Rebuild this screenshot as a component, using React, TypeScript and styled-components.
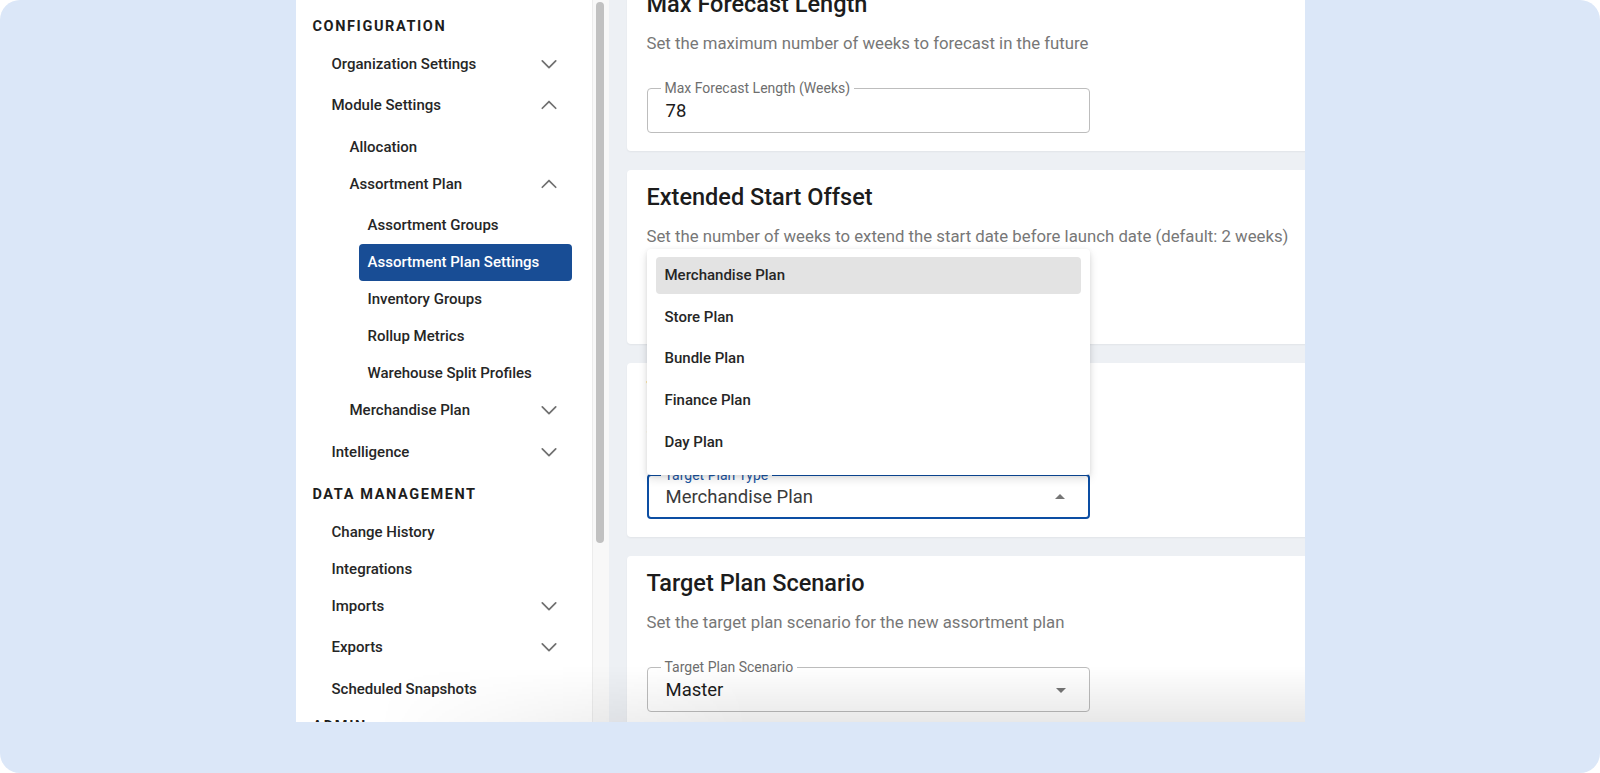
import React from 'react'
import styled, { createGlobalStyle } from 'styled-components'

const GlobalStyle = createGlobalStyle`
	html, body {
		margin: 0;
		padding: 0;
		background: #ffffff;
	}
	body {
		font-family: Roboto, "Noto Sans", "Liberation Sans", sans-serif;
		-webkit-font-smoothing: antialiased;
	}
	* {
		box-sizing: border-box;
	}
`

type NavItem =
	| { kind: 'header'; label: string }
	| { kind: 'row'; label: string; level: number; chevron?: 'up' | 'down'; active?: boolean }

const NAV: NavItem[] = [
	{ kind: 'header', label: 'CONFIGURATION' },
	{ kind: 'row', label: 'Organization Settings', level: 1, chevron: 'down' },
	{ kind: 'row', label: 'Module Settings', level: 1, chevron: 'up' },
	{ kind: 'row', label: 'Allocation', level: 2 },
	{ kind: 'row', label: 'Assortment Plan', level: 2, chevron: 'up' },
	{ kind: 'row', label: 'Assortment Groups', level: 3 },
	{ kind: 'row', label: 'Assortment Plan Settings', level: 3, active: true },
	{ kind: 'row', label: 'Inventory Groups', level: 3 },
	{ kind: 'row', label: 'Rollup Metrics', level: 3 },
	{ kind: 'row', label: 'Warehouse Split Profiles', level: 3 },
	{ kind: 'row', label: 'Merchandise Plan', level: 2, chevron: 'down' },
	{ kind: 'row', label: 'Intelligence', level: 1, chevron: 'down' },
	{ kind: 'header', label: 'DATA MANAGEMENT' },
	{ kind: 'row', label: 'Change History', level: 1 },
	{ kind: 'row', label: 'Integrations', level: 1 },
	{ kind: 'row', label: 'Imports', level: 1, chevron: 'down' },
	{ kind: 'row', label: 'Exports', level: 1, chevron: 'down' },
	{ kind: 'row', label: 'Scheduled Snapshots', level: 1 },
	{ kind: 'header', label: 'ADMIN' },
]

const PLAN_TYPES = ['Merchandise Plan', 'Store Plan', 'Bundle Plan', 'Finance Plan', 'Day Plan']

const Chevron = ({ dir }: { dir: 'up' | 'down' }) => (
	<svg width="26" height="26" viewBox="0 0 24 24" fill="none">
		<path
			d={dir === 'down' ? 'M5.8 9.2l6.2 6.2 6.2-6.2' : 'M5.8 15l6.2-6.2 6.2 6.2'}
			stroke="#707070"
			strokeWidth="1.6"
			strokeLinecap="round"
			strokeLinejoin="round"
		/>
	</svg>
)

const Caret = ({ dir }: { dir: 'up' | 'down' }) => (
	<svg width="24" height="24" viewBox="0 0 24 24">
		<path d={dir === 'down' ? 'M7 10l5 5 5-5z' : 'M7 14l5-5 5 5z'} fill="#767676" />
	</svg>
)

const App = () => {
	return (
		<>
			<GlobalStyle />
			<Frame>
				<Window>
					<Sidebar>
						{NAV.map((item, i) =>
							item.kind === 'header' ? (
								<SectionHeader key={i}>{item.label}</SectionHeader>
							) : (
								<NavRow key={i} $level={item.level} $tall={!!item.chevron} $active={!!item.active}>
									<span>{item.label}</span>
									{item.chevron ? <Chevron dir={item.chevron} /> : null}
								</NavRow>
							)
						)}
					</Sidebar>
					<ScrollTrack>
						<ScrollThumb />
					</ScrollTrack>
					<Main>
						<Cards>
							<Card>
								<CardTitle>Max Forecast Length</CardTitle>
								<CardText>Set the maximum number of weeks to forecast in the future</CardText>
								<Field>
									<FieldLabel>Max Forecast Length (Weeks)</FieldLabel>
									<FieldValue>78</FieldValue>
								</Field>
							</Card>
							<Card>
								<CardTitle>Extended Start Offset</CardTitle>
								<CardText>
									Set the number of weeks to extend the start date before launch date (default: 2 weeks)
								</CardText>
								<Field>
									<FieldLabel>Extended Start Offset (Weeks)</FieldLabel>
									<FieldValue>2</FieldValue>
								</Field>
							</Card>
							<Card>
								<CardTitle>Target Plan Type</CardTitle>
								<CardText>Set the target plan type for the new assortment plan</CardText>
								<Field $focused>
									<FieldLabel $focused>Target Plan Type</FieldLabel>
									<FieldValue $muted>Merchandise Plan</FieldValue>
									<Caret dir="up" />
									<Menu>
										{PLAN_TYPES.map((p, i) => (
											<MenuItem key={p} $selected={i === 0}>
												{p}
											</MenuItem>
										))}
									</Menu>
								</Field>
							</Card>
							<Card>
								<CardTitle>Target Plan Scenario</CardTitle>
								<CardText>Set the target plan scenario for the new assortment plan</CardText>
								<Field>
									<FieldLabel>Target Plan Scenario</FieldLabel>
									<FieldValue>Master</FieldValue>
									<Caret dir="down" />
								</Field>
							</Card>
						</Cards>
					</Main>
					<BottomFade />
				</Window>
			</Frame>
		</>
	)
}

const Frame = styled.div`
	width: 1600px;
	height: 773px;
	background: #dbe7f8;
	border-radius: 20px;
	display: flex;
	justify-content: center;
	align-items: flex-start;
	overflow: hidden;
`
const Window = styled.div`
	position: relative;
	width: 1009px;
	height: 722px;
	display: flex;
	overflow: hidden;
	background: #ffffff;
`
const Sidebar = styled.nav`
	flex: 0 0 296px;
	padding-top: 6.8px;
	display: flex;
	flex-direction: column;
	overflow: hidden;
`
const SectionHeader = styled.div`
	flex: 0 0 38.5px;
	display: flex;
	align-items: center;
	padding-left: 17px;
	font-size: 14.5px;
	font-weight: 700;
	letter-spacing: 1.6px;
	color: #1d1d1d;
`
const NavRow = styled.div<{ $level: number; $tall: boolean; $active: boolean }>`
	flex: 0 0 37px;
	display: flex;
	align-items: center;
	justify-content: space-between;
	margin: 0 20px ${(p) => (p.$tall ? 4.5 : 0)}px ${(p) => 9 + p.$level * 18}px;
	padding: 0 10px 0 9px;
	border-radius: 4px;
	font-size: 15px;
	font-weight: 500;
	color: ${(p) => (p.$active ? '#ffffff' : '#262626')};
	background: ${(p) => (p.$active ? '#184d95' : 'transparent')};
`
const ScrollTrack = styled.div`
	flex: 0 0 17px;
	background: #f8f8f8;
	border-left: 1px solid #ececec;
	padding: 2px 0 0 3px;
`
const ScrollThumb = styled.div`
	width: 8px;
	height: 541px;
	border-radius: 4px;
	background: #c1c1c1;
`
const Main = styled.main`
	flex: 1 1 auto;
	background: #edf0f4;
	padding-left: 18px;
	overflow: hidden;
`
const Cards = styled.div`
	width: 720px;
	margin-top: -23px;
	display: flex;
	flex-direction: column;
	gap: 19px;
`
const Card = styled.section`
	background: #ffffff;
	border-radius: 4px;
	box-shadow: 0 1px 2px rgba(0, 0, 0, 0.05);
	padding: 14px 20px 18px 20px;
	display: flex;
	flex-direction: column;
`
const CardTitle = styled.h2`
	margin: 0;
	font-size: 23.5px;
	line-height: 26px;
	font-weight: 500;
	color: #1c1c1c;
`
const CardText = styled.p`
	margin: 15px 0 34px 0;
	font-size: 16.75px;
	line-height: 22px;
	color: #777777;
`
const Field = styled.div<{ $focused?: boolean }>`
	position: relative;
	width: 443px;
	height: 45px;
	display: flex;
	align-items: center;
	justify-content: space-between;
	padding: 0 16px 0 18px;
	border-radius: 4px;
	border: ${(p) => (p.$focused ? '2px solid #0c4ea3' : '1px solid #bdbdbd')};
	padding-left: ${(p) => (p.$focused ? 17 : 18)}px;
`
const FieldLabel = styled.span<{ $focused?: boolean }>`
	position: absolute;
	top: -9px;
	left: ${(p) => (p.$focused ? 12 : 13)}px;
	padding: 0 4px;
	background: #ffffff;
	font-size: 14px;
	line-height: 16px;
	color: ${(p) => (p.$focused ? '#1b55a2' : '#6e6e6e')};
`
const FieldValue = styled.span<{ $muted?: boolean }>`
	font-size: 18.5px;
	color: ${(p) => (p.$muted ? '#3a3a3a' : '#1c1c1c')};
`
const Menu = styled.ul`
	position: absolute;
	z-index: 5;
	left: -2px;
	right: -2px;
	bottom: calc(100% + 1px);
	margin: 0;
	list-style: none;
	padding: 8px 9px 15px 9px;
	display: flex;
	flex-direction: column;
	gap: 4.6px;
	background: #ffffff;
	border-radius: 4px;
	box-shadow: 0 4px 10px rgba(0, 0, 0, 0.12), 0 1px 4px rgba(0, 0, 0, 0.08);
`
const MenuItem = styled.li<{ $selected?: boolean }>`
	height: 37px;
	display: flex;
	align-items: center;
	padding-left: 9px;
	border-radius: 4px;
	font-size: 15px;
	font-weight: 500;
	color: #262626;
	background: ${(p) => (p.$selected ? '#e3e3e3' : 'transparent')};
`
const BottomFade = styled.div`
	position: absolute;
	left: 0;
	right: 0;
	bottom: 0;
	height: 56px;
	pointer-events: none;
	background: linear-gradient(to bottom, rgba(0, 0, 0, 0) 0%, rgba(0, 0, 0, 0.09) 100%);
	mask-image: linear-gradient(to right, transparent 8%, #000 45%);
`

export default App
